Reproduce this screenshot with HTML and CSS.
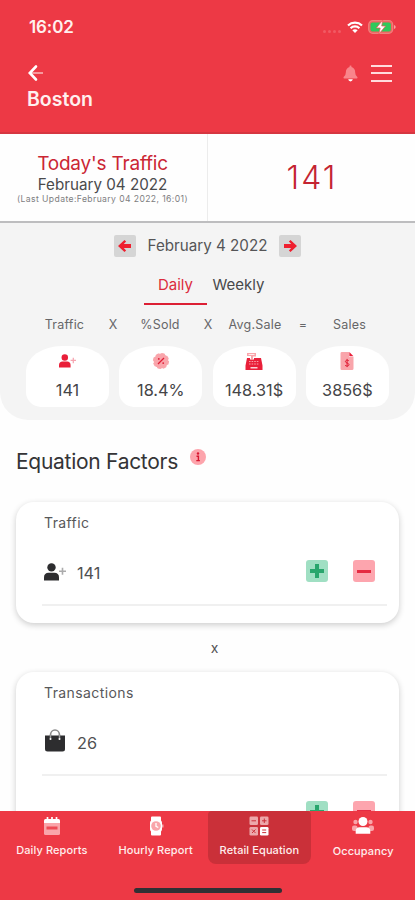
FILE: index.html
```html
<!DOCTYPE html>
<html lang="en">
<head>
<meta charset="utf-8">
<title>Retail Equation</title>
<link rel="stylesheet" href="styles.css">
</head>
<body>
<svg class="defs" width="0" height="0">
  <symbol id="user-plus" viewBox="0 0 22 18">
    <circle cx="7.5" cy="4.4" r="4.2"/>
    <path d="M0 17.5v-3.2c0-3 1.8-4.6 4.5-4.6h6c2.700 0 4.500 1.600 4.500 4.600v3.200z"/>
    <path d="M18.500 4.800v7M15 8.300h7" fill="none" stroke="currentColor" stroke-width="1.600" opacity=".4"/>
  </symbol>
  <symbol id="arrow" viewBox="0 0 14 12">
    <path d="M6.500 0L0 6l6.500 6 1.600-1.600-2.300-2.500H13V4.100H5.800l2.300-2.500z"/>
  </symbol>
</svg>
<div class="screen">
  <header class="header">
    <div class="status">
      <span class="time">16:02</span>
      <span class="dots"><i></i><i></i><i></i><i></i></span>
      <svg class="wifi" viewBox="0 0 16 12"><path d="M1 4.500a10.200 10.200 0 0 1 14 0M3.600 7.200a6.400 6.400 0 0 1 8.800 0" fill="none" stroke="#fff" stroke-width="2.200"/><path d="M5.300 9.300q2.700-2.200 5.400 0L8 12z" fill="#fff"/></svg>
      <svg class="battery" viewBox="0 0 28 14"><rect x=".7" y=".7" width="24" height="12.600" rx="4" fill="#f0605f" stroke="#f0807c" stroke-width="1.200"/><rect x="2.500" y="2.500" width="20.400" height="9" rx="2" fill="#2fc95b"/><path d="M26 5v4q1.700-.5 1.700-2T26 5" fill="#f9a09c"/><path d="M14.800 0L8.300 8h3.900l-1.300 6L17.600 6h-3.900z" fill="#fff" stroke="#ef5554" stroke-width=".7"/></svg>
    </div>
    <div class="tools">
      <svg class="back" viewBox="0 0 15 16"><path d="M3 8h12" fill="none" stroke="#f9a3a6" stroke-width="1.800"/><path d="M8 1.500L1.800 8 8 14.500" fill="none" stroke="#fff" stroke-width="2.600" stroke-linecap="round"/></svg>
      <svg class="bell" viewBox="0 0 16 18"><path d="M7 2V.8q1-.8 2 0V2q4 1 4 6 0 3.500 2.300 4.800.7 1.200-.5 1.400H1.200Q0 14 .7 12.800 3 11.500 3 8q0-5 4-6" fill="#f9858b"/><path d="M5.500 15.200h5q-.5 2.300-2.500 2.300t-2.500-2.300" fill="#fff"/></svg>
      <span class="menu"><i></i><i></i><i></i></span>
    </div>
    <h1 class="store">Boston</h1>
  </header>

  <section class="today">
    <div class="today-info">
      <div class="today-title">Today's Traffic</div>
      <div class="today-date">February 04 2022</div>
      <div class="today-update">(Last Update:February 04 2022, 16:01)</div>
    </div>
    <div class="today-count">141</div>
  </section>

  <section class="summary">
    <div class="date-row">
      <span class="step"><svg viewBox="0 0 14 12"><use href="#arrow"/></svg></span>
      <span class="date">February 4 2022</span>
      <span class="step next"><svg viewBox="0 0 14 12"><use href="#arrow"/></svg></span>
    </div>
    <div class="tabs"><span class="tab active">Daily</span><span class="tab">Weekly</span></div>
    <div class="formula">
      <span>Traffic</span><b>X</b><span>%Sold</span><b>X</b><span>Avg.Sale</span><b>=</b><span>Sales</span>
    </div>
    <div class="tiles">
      <div class="tile"><svg class="t-user" viewBox="0 0 22 18"><use href="#user-plus"/></svg><span>141</span></div>
      <div class="tile"><svg class="t-icon" viewBox="0 0 18 18"><circle cx="9" cy="9" r="7.400" fill="#f9a5ab"/><circle cx="9" cy="9" r="7.200" fill="none" stroke="#f9a5ab" stroke-width="1.800" stroke-dasharray="3.700 1.955"/><path d="M6 12l6-6" stroke="#e01c35" stroke-width="1.200"/><circle cx="6.800" cy="6.900" r=".9" fill="#e01c35"/><circle cx="11.200" cy="11.100" r=".9" fill="#e01c35"/></svg><span>18.4%</span></div>
      <div class="tile"><svg class="t-icon" viewBox="0 0 18 18"><path d="M2 1h9v3.500H8V7H6V4H2z" fill="#f9a5ab"/><path d="M3.500 2.500h6" stroke="#fff" stroke-width=".8"/><path d="M2 6h3v1.500h4V6h7l1.500 7.500V18H.5v-4.500z" fill="#e91f39"/><path d="M4 9.500h10M4 12h10" stroke="#f7a0a8" stroke-dasharray="1.600 1" stroke-width="1"/><path d="M5.500 15.800h7" stroke="#fff" stroke-width="1.200"/></svg><span>148.31$</span></div>
      <div class="tile"><svg class="t-icon" viewBox="0 0 18 18"><path d="M3.500 0h7.500v5h4.500v11.500Q15.500 18 14 18H3.800Q2.500 18 2.500 16.500v-15Q2.500 0 3.500 0" fill="#f9a5ab"/><path d="M11.300 0l4.200 4.300h-4.200z" fill="#e91f39"/><path d="M10.800 8.700C9.500 7.900 7.300 8.200 7.400 9.700s3.600 1.300 3.600 2.900-2.400 1.900-3.900.8M9.100 6.900v8.200" fill="none" stroke="#e01c35" stroke-width="1"/></svg><span>3856$</span></div>
    </div>
  </section>

  <main class="factors">
    <h2 class="title">Equation Factors <svg class="info" viewBox="0 0 16 16"><circle cx="8" cy="8" r="8" fill="#fda4ac"/><circle cx="8" cy="4.500" r="1.200" fill="#d81730"/><path d="M6.500 7.300h1.900v4M6.300 11.600h3.600" fill="none" stroke="#d81730" stroke-width="1.400"/></svg></h2>
    <article class="card">
      <h3>Traffic</h3>
      <div class="row">
        <svg class="r-icon" viewBox="0 0 22 18"><use href="#user-plus"/></svg>
        <span class="value">141</span>
        <span class="btn plus"></span><span class="btn minus"></span>
      </div>
    </article>
    <div class="times">x</div>
    <article class="card second">
      <h3>Transactions</h3>
      <div class="row">
        <svg class="bag" viewBox="0 0 20 23"><path d="M5.500 10V6a4.500 5 0 0 1 9 0v4" fill="none" stroke="#8b8b8b" stroke-width="1.700"/><path d="M0 6.500h20V20q0 2.500-2.500 2.500h-15Q0 22.500 0 20z" fill="#2d2d2f"/><path d="M5.500 6v3.500M14.500 6v3.500" stroke="#999" stroke-width="1.500"/><circle cx="5.500" cy="10" r="1" fill="#fff"/><circle cx="14.500" cy="10" r="1" fill="#fff"/></svg>
        <span class="value">26</span>
      </div>
      <div class="row actions"><span class="btn plus"></span><span class="btn minus"></span></div>
    </article>
  </main>

  <nav class="nav">
    <div class="item"><svg viewBox="0 0 20 20"><path d="M2 7h16v10.500q0 1.500-1.500 1.500h-13Q2 19 2 17.500z" fill="#f9a5aa"/><path d="M2 7V4.500Q2 3 3.500 3h13Q18 3 18 4.500V7z" fill="#fff"/><path d="M5.500 1v3M10 1v3M14.500 1v3" stroke="#fff" stroke-width="1.700"/><path d="M4.500 10.500h11v3h-11z" fill="#ee4b55"/></svg><span>Daily Reports</span></div>
    <div class="item"><svg viewBox="0 0 20 20"><path d="M6 .5h8q1 0 1 1V5H5V1.500q0-1 1-1M5 15h10v3.500q0 1-1 1H6q-1 0-1-1z" fill="#fff"/><rect x="4" y="4" width="12" height="12" rx="3" fill="#fff"/><circle cx="10" cy="10" r="4.800" fill="#f9a5aa"/><path d="M10 7v3.300l2.300 1.200" fill="none" stroke="#fff" stroke-width="1.300"/><path d="M16 8.500h1.500v3H16z" fill="#f9a5aa"/></svg><span>Hourly Report</span></div>
    <div class="item active"><svg viewBox="0 0 20 20"><rect x=".5" y=".5" width="8.500" height="8.500" rx="1.300" fill="#eca7aa"/><rect x="11" y=".5" width="8.500" height="8.500" rx="1.300" fill="#eca7aa"/><rect x=".5" y="11" width="8.500" height="8.500" rx="1.300" fill="#eca7aa"/><rect x="11" y="11" width="8.500" height="8.500" rx="1.300" fill="#fff"/><path d="M2.500 4.800H7M13 4.800h4.500M15.300 2.500V7M3 13.500l3.500 3.500M6.500 13.500L3 17M13.200 14h4M13.200 16.600h4" stroke="#cb3039" stroke-width="1"/></svg><span>Retail Equation</span></div>
    <div class="item last"><svg class="people" viewBox="0 0 22 20"><g fill="#f9a5aa"><circle cx="3.500" cy="6" r="2.200"/><circle cx="18.500" cy="6" r="2.200"/><rect y="9.500" width="5.500" height="5.500" rx="2"/><rect x="16.500" y="9.500" width="5.500" height="5.500" rx="2"/></g><circle cx="11" cy="5.500" r="4.500" fill="#fff"/><path d="M3.700 17.800v-2.600q0-4 4-4h6.600q4 0 4 4v2.600z" fill="#fff"/></svg><span>Occupancy</span></div>
    <div class="home"></div>
  </nav>
</div>
</body>
</html>
```
FILE: styles.css
```css
* { box-sizing: border-box; }
body { margin: 0; font-family: Inter, Roboto, sans-serif; color: #3c3c3e; background: #fefefe; }
h1, h2, h3 { margin: 0; }
svg { display: block; flex: none; overflow: visible; }
.defs { position: absolute; }
.screen { width: 415px; height: 900px; overflow: hidden; display: flex; flex-direction: column; background: #fefefe; }

.header { flex: none; height: 134px; background: #ed3945; border-bottom: 2px solid #d63641; padding: 16px 0 0 27px; color: #fff; }
.status { height: 22px; display: flex; align-items: center; padding: 0 19px 0 2px; }
.time { flex: 1; font-size: 17px; line-height: 22px; font-weight: 600; letter-spacing: -.1px; color: #fff0ee; }
.dots { display: flex; gap: 2px; margin: 8px 6px 0 0; }
.dots i { width: 3px; height: 3px; border-radius: 50%; background: #f15a63; }
.wifi { width: 16px; height: 12px; margin-right: 5px; }
.battery { width: 28px; height: 14px; }
.tools { height: 34px; margin-top: 18px; display: flex; align-items: center; padding-right: 23px; }
.back { width: 15px; height: 16px; margin: 0 auto 0 1px; }
.bell { width: 15px; height: 17px; margin-right: 13px; }
.menu { width: 21px; height: 17px; display: flex; flex-direction: column; justify-content: space-between; }
.menu i { height: 2px; background: #ffdcdd; }
.store { font-size: 19.500px; line-height: 22px; font-weight: 600; margin-top: -2px; color: #fff0ef; }

.today { flex: none; height: 89px; display: flex; border-bottom: 2px solid #bdbdbf; background: #fefefe; }
.today-info { width: 208px; border-right: 1px solid #ececec; text-align: center; padding: 19px 2px 0 0; white-space: nowrap; display: flex; flex-direction: column; align-items: center; }
.today-title { font-size: 19px; line-height: 21px; letter-spacing: -.2px; color: #cb2634; }
.today-date { font-size: 15.200px; line-height: 21px; color: #4a4a4c; }
.today-update { font-size: 8.600px; line-height: 9px; color: #7d7d7f; letter-spacing: .4px; }
.today-count { flex: 1; font-size: 32px; line-height: 87px; text-align: center; color: #c42431; font-weight: 300; letter-spacing: 2px; padding-left: 1px; }

.summary { flex: none; height: 197px; background: #f4f4f4; border-radius: 0 0 28px 28px; padding-top: 11px; }
.date-row { display: flex; justify-content: center; align-items: center; height: 23px; gap: 12px; }
.step { width: 22px; height: 22px; border-radius: 2px; background: #d5d5d5; display: flex; align-items: center; justify-content: center; }
.step svg { width: 14px; height: 12px; fill: #ef1f2f; }
.next svg { transform: scaleX(-1); }
.date { font-size: 15.200px; line-height: 22px; color: #555557; }
.tabs { display: flex; height: 40px; margin: 8px 0 0 144px; }
.tab { width: 63px; height: 40px; line-height: 40px; text-align: center; font-size: 15px; color: #48484a; }
.tab.active { color: #dc2c3d; border-bottom: 2px solid #dc1f34; }
.formula { display: grid; grid-template-columns: 73px 24px 70px 26px 68px 28px 65px; margin: 8px 0 0 28px; height: 24px; line-height: 24px; text-align: center; font-size: 12.500px; color: #666668; letter-spacing: .2px; }
.formula b { font-weight: 400; }
.tiles { display: grid; grid-template-columns: repeat(4, 83px); gap: 10.300px; margin: 9px 0 0 26px; }
.tile { height: 61px; background: #fff; border-radius: 36px 36px 15px 15px / 25px 25px 15px 15px; display: flex; flex-direction: column; align-items: center; padding-top: 6px; color: #e91f39; }
.tile span { font-size: 16.300px; line-height: 20px; margin-top: 10px; color: #454547; }
.t-icon { width: 18px; height: 18px; }
.t-user { width: 17px; height: 18px; fill: currentColor; }

.factors { flex: 1; min-height: 0; overflow: hidden; padding: 28px 16px 0; }
.title { display: flex; height: 28px; font-size: 21px; line-height: 28px; font-weight: 400; color: #343436; gap: 12px; letter-spacing: -.28px; }
.info { width: 16px; height: 16px; margin-top: 1px; }
.card { height: 121px; margin-top: 26px; border-radius: 18px; background: #fff; box-shadow: 0 2px 6px rgba(0,0,0,.2); padding: 11px 12px 0 26px; }
.card h3 { font-size: 14px; line-height: 20px; font-weight: 400; padding-left: 2px; color: #58585a; letter-spacing: .4px; }
.row { display: flex; align-items: center; height: 73px; padding: 6px 12px 0 2px; border-bottom: 2px solid #f0f0f0; }
.r-icon { width: 22px; height: 18px; margin-right: 11px; color: #2d2d2f; fill: currentColor; }
.bag { width: 20px; height: 23px; margin: -2px 12px 0 1px; }
.value { font-size: 16.300px; line-height: 22px; flex: 1; color: #505052; padding-top: 2px; }
.btn { width: 22px; height: 22px; border-radius: 3px; margin-top: -1px; background: linear-gradient(#e52b42, #e52b42) center / 14px 3px no-repeat #fda5ae; }
.plus { margin-right: 25px; background: linear-gradient(#29a66d, #29a66d) center / 14px 4px no-repeat, linear-gradient(#29a66d, #29a66d) center / 4px 14px no-repeat #a0dfc3; }
.times { height: 49px; line-height: 50px; text-align: center; font-size: 14px; color: #555557; padding-left: 14px; }
.second { height: 180px; margin-top: 0; }
.actions { height: 66px; border: 0; justify-content: flex-end; }

.nav { flex: none; height: 89px; background: #ed3945; display: grid; grid-template-columns: repeat(4, 1fr); grid-template-rows: 53px 36px; color: #ffeeed; }
.item { display: flex; flex-direction: column; align-items: center; padding-top: 5px; font-size: 11px; line-height: 16px; font-weight: 500; letter-spacing: .1px; white-space: nowrap; }
.item svg { width: 20px; height: 20px; margin-bottom: 6px; }
.item .people { width: 22px; }
.active.item { background: #ca3039; border-radius: 4px 4px 8px 8px; }
.last span { padding-top: 1px; }
.home { grid-column: 1 / -1; width: 148px; height: 5px; border-radius: 3px; background: #303034; margin: 24px auto 0; }
```
